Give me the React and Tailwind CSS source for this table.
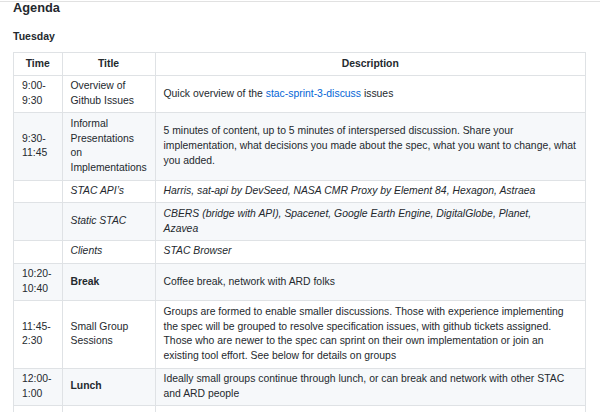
const rows = [
  {
    time: ["9:00-", "9:30"],
    title: "Overview of Github Issues",
    desc: (
      <>
        Quick overview of the <a className="text-[#0366d6]">stac-sprint-3-discuss</a> issues
      </>
    ),
  },
  {
    time: ["9:30-", "11:45"],
    title: (
      <>
        Informal
        <br />
        Presentations
        <br />
        on
        <br />
        Implementations
      </>
    ),
    desc: "5 minutes of content, up to 5 minutes of interspersed discussion. Share your implementation, what decisions you made about the spec, what you want to change, what you added.",
  },
  {
    time: null,
    title: <em>STAC API’s</em>,
    desc: <em>Harris, sat-api by DevSeed, NASA CMR Proxy by Element 84, Hexagon, Astraea</em>,
  },
  {
    time: null,
    title: <em>Static STAC</em>,
    desc: (
      <em>
        CBERS (bridge with API), Spacenet, Google Earth Engine, DigitalGlobe, Planet,
        <br />
        Azavea
      </em>
    ),
  },
  {
    time: null,
    title: <em>Clients</em>,
    desc: <em>STAC Browser</em>,
  },
  {
    time: ["10:20-", "10:40"],
    title: <strong className="font-bold">Break</strong>,
    desc: "Coffee break, network with ARD folks",
  },
  {
    time: ["11:45-", "2:30"],
    title: (
      <>
        Small Group
        <br />
        Sessions
      </>
    ),
    desc: "Groups are formed to enable smaller discussions. Those with experience implementing the spec will be grouped to resolve specification issues, with github tickets assigned. Those who are newer to the spec can sprint on their own implementation or join an existing tool effort. See below for details on groups",
  },
  {
    time: ["12:00-", "1:00"],
    title: <strong className="font-bold">Lunch</strong>,
    desc: "Ideally small groups continue through lunch, or can break and network with other STAC and ARD people",
  },
];

const cell = "border border-[#dfe2e5] px-[8px] py-[3.5px] align-middle";

export default function App() {
  return (
    <div
      className="w-[600px] h-[412px] overflow-hidden bg-white text-[#24292e]"
      style={{ fontFamily: '"Liberation Sans", Arial, sans-serif' }}
    >
      <div className="mt-px h-px bg-[#e1e1e1]" />
      <div className="pl-[13px]">
        <h3 className="text-[12.8px] leading-[11px] h-[11px] font-bold">Agenda</h3>
        <h4 className="mt-[16px] text-[10.5px] leading-[14px] font-bold">Tuesday</h4>

        <table className="mt-[9px] table-fixed w-[573px] border-collapse text-[10.4px] leading-[14.8px]">
          <colgroup>
            <col className="w-[48.5px]" />
            <col className="w-[93px]" />
            <col />
          </colgroup>
          <thead>
            <tr className="bg-white">
              <th className={`${cell} text-center font-bold`}>Time</th>
              <th className={`${cell} text-center font-bold`}>Title</th>
              <th className={`${cell} text-center font-bold`}>Description</th>
            </tr>
          </thead>
          <tbody>
            {rows.map((r, i) => (
              <tr key={i} className={i % 2 === 1 ? "bg-[#f6f8fa]" : "bg-white"}>
                <td className={cell}>
                  {r.time && (
                    <>
                      {r.time[0]}
                      <br />
                      {r.time[1]}
                    </>
                  )}
                </td>
                <td className={cell}>{r.title}</td>
                <td className={`${cell} pr-[6px]`}>{r.desc}</td>
              </tr>
            ))}
            <tr className="bg-white">
              <td className={`${cell} h-[40px]`} />
              <td className={cell} />
              <td className={cell} />
            </tr>
          </tbody>
        </table>
      </div>
    </div>
  );
}
